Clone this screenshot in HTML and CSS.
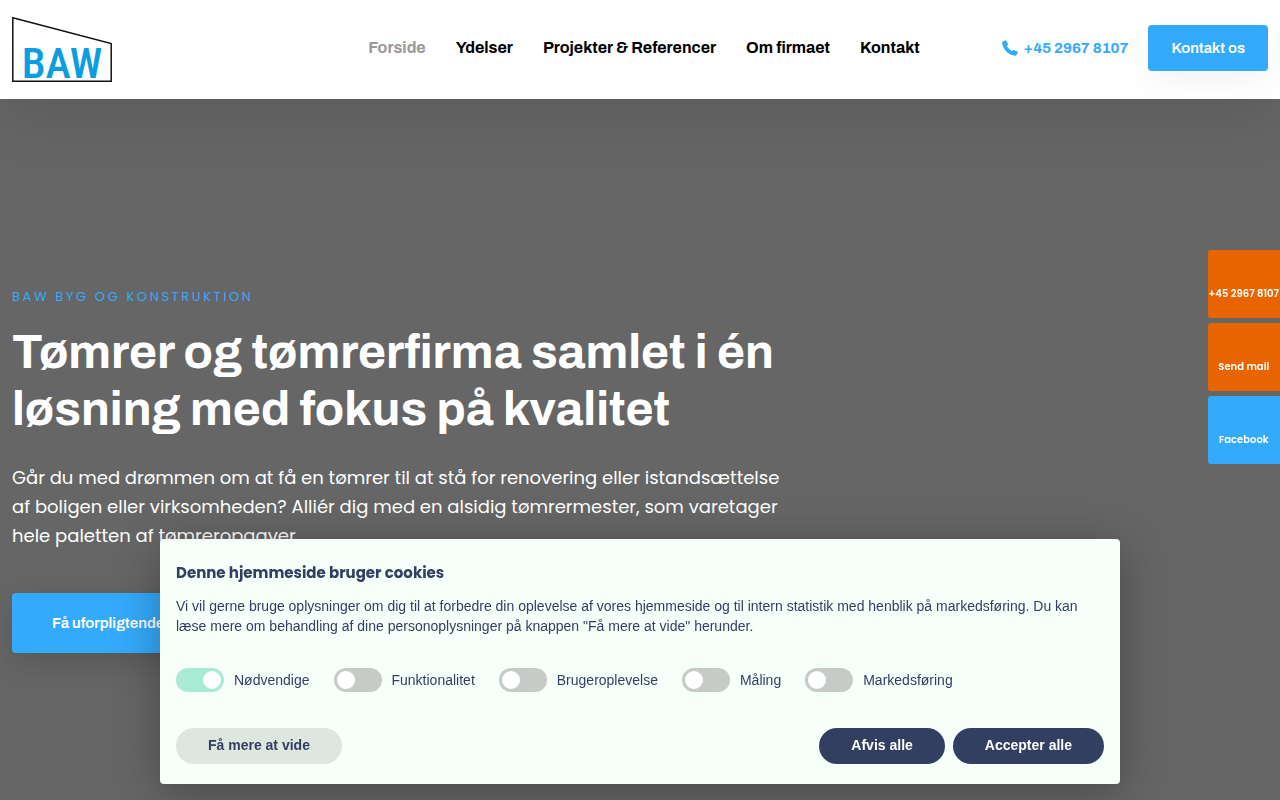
FILE: index.html
```
<!DOCTYPE html>
<html lang="da">
<head>
    <meta charset="utf-8">
    <meta name="viewport" content="width=device-width, initial-scale=1">
    <title>BAW Byg og Konstruktion</title>
    <link rel="stylesheet" href="styles.css">
</head>
<body>
    <header class="header">
        <a class="logo" href="#" aria-label="BAW">
            <svg width="100" height="68" viewBox="0 -2 100 68">
                <path d="M.8 1.8 99.2 27.6V65.2H.8Z" fill="#fff" stroke="#111" stroke-width="1.5"/>
                <text class="logo-text" x="50" y="62" text-anchor="middle">BAW</text>
            </svg>
        </a>
        <nav class="nav">
            <a class="active" href="#">Forside</a>
            <a href="#">Ydelser</a>
            <a href="#">Projekter &amp; Referencer</a>
            <a href="#">Om firmaet</a>
            <a href="#">Kontakt</a>
        </nav>
        <div class="header-contact">
            <a class="phone" href="tel:+4529678107">
                <svg width="16" height="16" viewBox="0 0 16 16" fill="#34aafc">
                    <path d="M.7 1.5 2.8.4C3.4.1 4 .3 4.4.8L5.9 3.8C6.1 4.3 6 4.8 5.6 5.2L4.9 6.1C6.1 8.2 7.7 9.9 9.8 11.1L10.9 10.3C11.4 10 11.9 10 12.4 10.2L15.2 11.6C15.8 12 16 12.5 15.7 13.1L14.6 15.1C14.3 15.6 13.8 15.8 13.3 15.8 6.5 15.5.4 9.4.2 2.6.2 2.1.3 1.7.7 1.5Z"/>
                </svg>
                +45 2967 8107
            </a>
            <a class="button header-button" href="#">Kontakt os</a>
        </div>
    </header>

    <main class="hero">
        <div class="hero-content">
            <p class="eyebrow">BAW BYG OG KONSTRUKTION</p>
            <h1>Tømrer og tømrerfirma samlet i én løsning med fokus på kvalitet</h1>
            <p class="lead">Går du med drømmen om at få en tømrer til at stå for renovering eller istandsættelse af boligen eller virksomheden? Alliér dig med en alsidig tømrermester, som varetager hele paletten af tømreropgaver.</p>
            <a class="button hero-button" href="#">Få uforpligtende tilbud</a>
        </div>
    </main>

    <aside class="side-links">
        <a href="tel:+4529678107">+45 2967 8107</a>
        <a href="#">Send mail</a>
        <a class="facebook" href="#">Facebook</a>
    </aside>

    <section class="cookie">
        <h2>Denne hjemmeside bruger cookies</h2>
        <p>Vi vil gerne bruge oplysninger om dig til at forbedre din oplevelse af vores hjemmeside og til intern statistik med henblik på markedsføring. Du kan læse mere om behandling af dine personoplysninger på knappen "Få mere at vide" herunder.</p>
        <div class="toggles">
            <label><input type="checkbox" checked>Nødvendige</label>
            <label><input type="checkbox">Funktionalitet</label>
            <label><input type="checkbox">Brugeroplevelse</label>
            <label><input type="checkbox">Måling</label>
            <label><input type="checkbox">Markedsføring</label>
        </div>
        <div class="cookie-buttons">
            <button class="more">Få mere at vide</button>
            <button>Afvis alle</button>
            <button>Accepter alle</button>
        </div>
    </section>
</body>
</html>
```
FILE: styles.css
```
* {
    box-sizing: border-box;
}
body {
    margin: 0;
    min-height: 100vh;
    display: flex;
    flex-direction: column;
    background-color: #666;
    font-family: Poppins, Inter, sans-serif;
    font-variant-ligatures: none;
    color: #fff;
}
a {
    text-decoration: none;
}
.header {
    display: grid;
    grid-template-columns: 1fr auto 1fr;
    align-items: center;
    padding: 14px 12px 17px;
    background-color: #fff;
    box-shadow: 0 20px 60px rgba(0,0,0,0.1);
    font-family: Archivo, "Liberation Sans", sans-serif;
    font-weight: 600;
}
.logo,
.logo svg {
    display: block;
    overflow: visible;
}
.logo-text {
    font-family: "Liberation Sans Narrow", "Roboto Condensed", sans-serif;
    font-size: 43px;
    font-weight: 500;
    fill: #0a9de2;
}
.nav {
    display: flex;
    gap: 30px;
    padding-left: 8px;
    font-size: 16px;
    line-height: 24px;
    font-weight: 700;
}
.nav a {
    color: #000;
}
.nav a.active {
    color: #999;
}
.header-contact {
    display: flex;
    justify-content: flex-end;
    align-items: center;
    gap: 20px;
    font-size: 15px;
}
.phone {
    display: flex;
    align-items: center;
    gap: 6px;
    color: #34aafc;
    font-weight: 700;
}
.button {
    display: inline-block;
    border-radius: 4px;
    background-color: #34aafc;
    color: #fff;
    font-family: Archivo, "Liberation Sans", sans-serif;
    font-size: 15px;
    font-weight: 600;
}
.header-button {
    padding: 0 23px;
    line-height: 46px;
    box-shadow: 0 10px 30px rgba(0,0,0,0.05);
}
.hero {
    flex: 1;
    padding: 186px 12px 0;
}
.hero-content {
    max-width: 790px;
}
.eyebrow {
    margin: 0 0 15px;
    color: #34aafc;
    font-size: 13px;
    line-height: 24px;
    letter-spacing: 0.2em;
}
.hero h1 {
    margin: 0 0 25px;
    font-family: Archivo, "Liberation Sans", sans-serif;
    font-size: 48px;
    line-height: 57px;
    font-weight: 700;
}
.lead {
    margin: 0 0 43px;
    font-size: 18px;
    line-height: 29px;
}
.hero-button {
    padding: 0 40px;
    line-height: 60px;
    box-shadow: 0 10px 30px rgba(0,0,0,0.15);
}
.side-links {
    position: fixed;
    top: 250px;
    right: 0;
    display: flex;
    flex-direction: column;
    gap: 5px;
}
.side-links a {
    padding: 36px 1px 16px;
    border-radius: 3px 0 0 3px;
    background-color: #e86400;
    color: #fff;
    font-size: 10px;
    font-weight: 600;
    line-height: 16px;
    text-align: center;
}
.side-links .facebook {
    background-color: #34aafc;
}
.cookie {
    position: fixed;
    bottom: 16px;
    left: 50%;
    width: 75%;
    transform: translateX(-50%);
    padding: 24px 16px 20px;
    border-radius: 4px;
    background-color: #f6fff9;
    color: #323f60;
    font-family: "Liberation Sans", sans-serif;
    font-size: 14px;
    line-height: 20px;
    box-shadow: 0 8px 48px rgba(0,0,0,0.3);
}
.cookie h2 {
    margin: 0 0 14px;
    font-family: Poppins, Inter, sans-serif;
    font-size: 15px;
    line-height: 19px;
}
.cookie p {
    margin: 0 0 32px;
}
.toggles {
    display: flex;
    flex-wrap: wrap;
    gap: 24px;
    margin-bottom: 36px;
}
.toggles label {
    display: flex;
    align-items: center;
    gap: 10px;
}
.toggles input {
    appearance: none;
    display: flex;
    width: 48px;
    height: 24px;
    margin: 0;
    padding: 3px;
    border-radius: 12px;
    background-color: #c6cbc7;
    cursor: pointer;
}
.toggles input::before {
    content: "";
    width: 18px;
    height: 18px;
    border-radius: 50%;
    background-color: #fff;
}
.toggles input:checked {
    justify-content: flex-end;
    background-color: #a9ead5;
}
.cookie-buttons {
    display: flex;
    gap: 8px;
}
.cookie-buttons button {
    height: 36px;
    padding: 0 32px 2px;
    border: none;
    border-radius: 18px;
    background-color: #323f60;
    color: #fff;
    font-family: inherit;
    font-size: 14px;
    font-weight: 700;
    cursor: pointer;
}
.cookie-buttons .more {
    margin-right: auto;
    background-color: #dde6df;
    color: #323f60;
}
```
